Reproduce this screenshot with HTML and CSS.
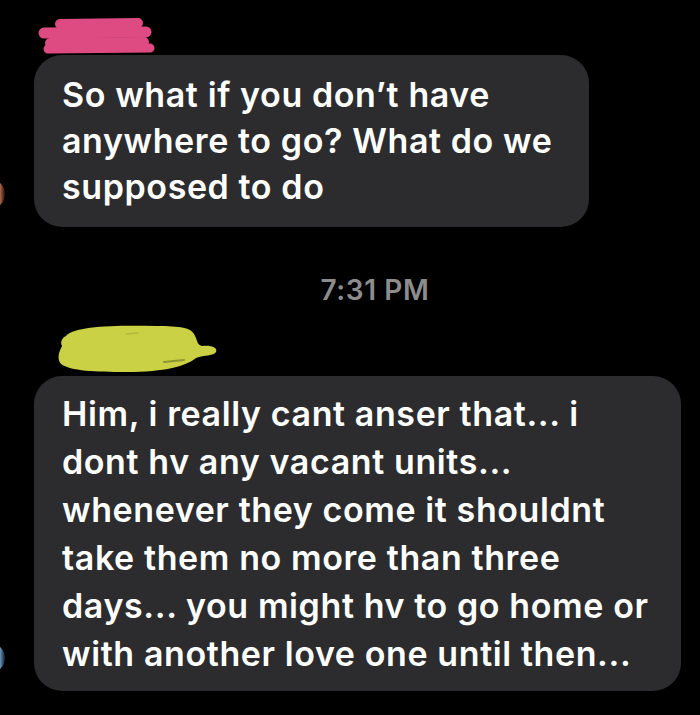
FILE: index.html
```html
<!DOCTYPE html>
<html lang="en">
<head>
    <meta charset="UTF-8">
    <meta name="viewport" content="width=device-width, initial-scale=1.0">
    <title>Messages</title>
    <link rel="stylesheet" href="styles.css">
</head>
<body>

<div class="chat">
    <svg class="name-pink" width="120" height="38" viewBox="0 0 120 38">
        <path d="M22 6 L100 5" stroke="#de4b82" stroke-width="10" stroke-linecap="round" fill="none"/>
        <path d="M6 15 L108 14" stroke="#de4b82" stroke-width="11" stroke-linecap="round" fill="none"/>
        <path d="M12 25 L106 24" stroke="#de4b82" stroke-width="10" stroke-linecap="round" fill="none"/>
        <path d="M10 31 L112 30" stroke="#de4b82" stroke-width="9" stroke-linecap="round" fill="none"/>
    </svg>

    <div class="row">
        <div class="avatar avatar-brown"></div>
        <div class="bubble bubble-first">
            So what if you don’t have<br>
            anywhere to go? What do we<br>
            supposed to do
        </div>
    </div>

    <div class="time">7:31 PM</div>

    <svg class="name-yellow" width="170" height="54" viewBox="0 0 170 54">
        <path d="M10 14 C18 4 60 3 100 4 C125 4 135 6 138 12 C142 18 140 22 146 24 C156 23 162 26 160 30 C158 34 148 33 140 36 C130 44 110 50 70 50 C40 50 14 49 5 42 C0 36 4 28 6 24 C4 20 6 16 10 14 Z" fill="#cad144"/>
        <path d="M108 40 L128 38" stroke="#8e9430" stroke-width="2" stroke-linecap="round" fill="none"/>
        <path d="M70 12 L82 11" stroke="#b3b93a" stroke-width="1.5" stroke-linecap="round" fill="none"/>
    </svg>

    <div class="row">
        <div class="avatar avatar-blue"></div>
        <div class="bubble bubble-second">
            Him, i really cant anser that... i<br>
            dont hv any vacant units...<br>
            whenever they come it shouldnt<br>
            take them no more than three<br>
            days... you might hv to go home or<br>
            with another love one until then...
        </div>
    </div>
</div>

</body>
</html>
```

FILE: styles.css
```css
body {
    margin: 0;
    background-color: #000;
    font-family: Inter, "Noto Sans", sans-serif;
    overflow: hidden;
}
.chat {
    padding-top: 18px;
    height: 715px;
    box-sizing: border-box;
}
.name-pink {
    display: block;
    margin-left: 38px;
}
.name-yellow {
    display: block;
    margin-left: 56px;
    margin-top: 16px;
}
.row {
    display: flex;
    align-items: flex-end;
}
.avatar {
    width: 30px;
    height: 30px;
    border-radius: 50%;
    margin-left: -25px;
    margin-right: 29px;
    margin-bottom: 18px;
    flex-shrink: 0;
}
.avatar-brown {
    background: linear-gradient(90deg, #120b08 50%, #a45c40 85%, #1a100c 100%);
}
.avatar-blue {
    background: linear-gradient(90deg, #05080c 50%, #5d89b0 85%, #101a24 100%);
}
.bubble {
    background-color: #2c2c2e;
    color: #fff;
    border-radius: 28px;
    font-size: 34px;
    font-weight: 600;
    letter-spacing: 0.6px;
    white-space: nowrap;
    box-sizing: border-box;
    padding-left: 28px;
}
.bubble-first {
    width: 555px;
    line-height: 46px;
    padding-top: 17px;
    padding-bottom: 17px;
    margin-top: -1px;
}
.bubble-second {
    width: 647px;
    line-height: 48px;
    padding-top: 14px;
    padding-bottom: 13px;
}
.time {
    text-align: center;
    color: #8d8d8d;
    font-size: 28px;
    font-weight: 600;
    letter-spacing: 0.6px;
    line-height: 32px;
    margin-top: 47px;
    padding-left: 50px;
}
```
